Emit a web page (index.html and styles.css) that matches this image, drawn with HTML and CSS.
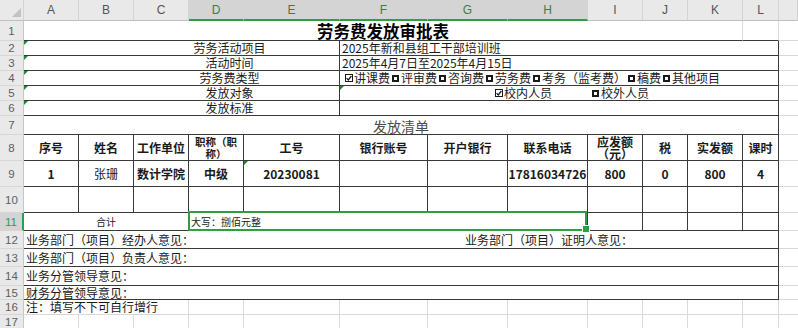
FILE: index.html
```html
<!DOCTYPE html>
<html lang="zh-CN">
<head>
<meta charset="utf-8">
<title>劳务费发放审批表</title>
<link rel="stylesheet" href="styles.css">
</head>
<body>
<div class="sheet">
  <div class="corner"><span class="tri"></span></div>
  <div class="ch">A</div>
  <div class="ch">B</div>
  <div class="ch">C</div>
  <div class="ch sel">D</div>
  <div class="ch sel">E</div>
  <div class="ch sel">F</div>
  <div class="ch sel">G</div>
  <div class="ch sel">H</div>
  <div class="ch">I</div>
  <div class="ch">J</div>
  <div class="ch">K</div>
  <div class="ch">L</div>
  <div class="ch"></div>

  <div class="rh">1</div>
  <div class="c s11 bb title">劳务费发放审批表</div>
  <div class="c bb"></div>
  <div class="c m"></div>

  <div class="rh">2</div>
  <div class="c s5 b label err">劳务活动项目</div>
  <div class="c s7 b val">2025年新和县组工干部培训班</div>
  <div class="c m"></div>

  <div class="rh">3</div>
  <div class="c s5 b label err">活动时间</div>
  <div class="c s7 b val">2025年4月7日至2025年4月15日</div>
  <div class="c m"></div>

  <div class="rh">4</div>
  <div class="c s5 b label err">劳务费类型</div>
  <div class="c s7 b val types">
    <svg class="cb on" viewBox="0 0 8 8"><rect x="0.5" y="0.5" width="7" height="7" fill="none" stroke="#1a1a1a" stroke-width="1"/><path d="M1.6 4.1 L3.3 5.9 L6.4 2" fill="none" stroke="#1a1a1a" stroke-width="1.3"/></svg><span>讲课费</span>
    <svg class="cb" viewBox="0 0 7 7"><rect x="1" y="1" width="5" height="5" fill="none" stroke="#1a1a1a" stroke-width="2"/></svg><span>评审费</span>
    <svg class="cb" viewBox="0 0 7 7"><rect x="1" y="1" width="5" height="5" fill="none" stroke="#1a1a1a" stroke-width="2"/></svg><span>咨询费</span>
    <svg class="cb" viewBox="0 0 7 7"><rect x="1" y="1" width="5" height="5" fill="none" stroke="#1a1a1a" stroke-width="2"/></svg><span>劳务费</span>
    <svg class="cb" viewBox="0 0 7 7"><rect x="1" y="1" width="5" height="5" fill="none" stroke="#1a1a1a" stroke-width="2"/></svg><span>考务（监考费）</span>
    <svg class="cb" viewBox="0 0 7 7"><rect x="1" y="1" width="5" height="5" fill="none" stroke="#1a1a1a" stroke-width="2"/></svg><span>稿费</span>
    <svg class="cb" viewBox="0 0 7 7"><rect x="1" y="1" width="5" height="5" fill="none" stroke="#1a1a1a" stroke-width="2"/></svg><span>其他项目</span>
  </div>
  <div class="c m"></div>

  <div class="rh">5</div>
  <div class="c s5 b label err">发放对象</div>
  <div class="c s7 b val target err">
    <svg class="cb on" viewBox="0 0 8 8"><rect x="0.5" y="0.5" width="7" height="7" fill="none" stroke="#1a1a1a" stroke-width="1"/><path d="M1.6 4.1 L3.3 5.9 L6.4 2" fill="none" stroke="#1a1a1a" stroke-width="1.3"/></svg><span>校内人员</span>
    <svg class="cb gap" viewBox="0 0 7 7"><rect x="1" y="1" width="5" height="5" fill="none" stroke="#1a1a1a" stroke-width="2"/></svg><span>校外人员</span>
  </div>
  <div class="c m"></div>

  <div class="rh">6</div>
  <div class="c s5 b label err">发放标准</div>
  <div class="c s7 b val"></div>
  <div class="c m"></div>

  <div class="rh">7</div>
  <div class="c s12 b list">发放清单</div>
  <div class="c m"></div>

  <div class="rh">8</div>
  <div class="c b hd">序号</div>
  <div class="c b hd">姓名</div>
  <div class="c b hd">工作单位</div>
  <div class="c b hd wrap small">职称（职称）</div>
  <div class="c b hd">工号</div>
  <div class="c b hd">银行账号</div>
  <div class="c b hd">开户银行</div>
  <div class="c b hd">联系电话</div>
  <div class="c b hd wrap">应发额（元）</div>
  <div class="c b hd">税</div>
  <div class="c b hd">实发额</div>
  <div class="c b hd">课时</div>
  <div class="c m"></div>

  <div class="rh">9</div>
  <div class="c b hd">1</div>
  <div class="c b">张珊</div>
  <div class="c b hd">数计学院</div>
  <div class="c b hd">中级</div>
  <div class="c b hd err">20230081</div>
  <div class="c b"></div>
  <div class="c b"></div>
  <div class="c b hd">17816034726</div>
  <div class="c b hd">800</div>
  <div class="c b hd">0</div>
  <div class="c b hd">800</div>
  <div class="c b hd">4</div>
  <div class="c m"></div>

  <div class="rh">10</div>
  <div class="c b"></div>
  <div class="c b"></div>
  <div class="c b"></div>
  <div class="c b"></div>
  <div class="c b"></div>
  <div class="c b"></div>
  <div class="c b"></div>
  <div class="c b"></div>
  <div class="c b"></div>
  <div class="c b"></div>
  <div class="c b"></div>
  <div class="c b"></div>
  <div class="c m"></div>

  <div class="rh sel">11</div>
  <div class="c s3 b tiny">合计</div>
  <div class="c s5 b tiny val selbox">大写：捌佰元整</div>
  <div class="c b"></div>
  <div class="c b"></div>
  <div class="c b"></div>
  <div class="c b"></div>
  <div class="c m"></div>

  <div class="rh">12</div>
  <div class="c s12 b val"><span>业务部门（项目）经办人意见：</span><span class="proof">业务部门（项目）证明人意见：</span></div>
  <div class="c m"></div>

  <div class="rh">13</div>
  <div class="c s12 b val">业务部门（项目）负责人意见：</div>
  <div class="c m"></div>

  <div class="rh">14</div>
  <div class="c s12 b val">业务分管领导意见：</div>
  <div class="c m"></div>

  <div class="rh">15</div>
  <div class="c s12 b val">财务分管领导意见：</div>
  <div class="c m"></div>

  <div class="rh">16</div>
  <div class="c s3 val">注：填写不下可自行增行</div>
  <div class="c"></div>
  <div class="c"></div>
  <div class="c"></div>
  <div class="c"></div>
  <div class="c"></div>
  <div class="c"></div>
  <div class="c"></div>
  <div class="c"></div>
  <div class="c"></div>
  <div class="c m"></div>

  <div class="rh">17</div>
  <div class="c"></div>
  <div class="c"></div>
  <div class="c"></div>
  <div class="c"></div>
  <div class="c"></div>
  <div class="c"></div>
  <div class="c"></div>
  <div class="c"></div>
  <div class="c"></div>
  <div class="c"></div>
  <div class="c"></div>
  <div class="c"></div>
  <div class="c m"></div>
</div>
</body>
</html>
```

FILE: styles.css
```css
* { box-sizing: border-box; }

html, body {
  margin: 0;
  padding: 0;
  background: #ffffff;
}

body {
  width: 798px;
  height: 328px;
  overflow: hidden;
  font-family: "Noto Sans CJK SC", "Noto Sans", sans-serif;
  color: #1a1a1a;
}

.sheet {
  display: grid;
  grid-template-columns: 24px 55px 55px 55px 55px 96px 88px 80px 80px 55px 45px 55px 36px 19px;
  grid-template-rows: 21px 20px 15px 15px 15px 15px 15px 19px 26px 26px 26px 18px 18px 18px 19px 14px 15px 14px;
}

/* headers */
.corner,
.ch {
  background: #e9e9e9;
  border-right: 1px solid #d3d3d3;
  border-bottom: 1px solid #bfbfbf;
}

.corner {
  display: flex;
  justify-content: flex-end;
  align-items: flex-end;
  padding: 0 2px 3px 0;
}

.tri {
  width: 0;
  height: 0;
  border-left: 9px solid transparent;
  border-bottom: 9px solid #c2c2c2;
}

.ch {
  display: flex;
  align-items: center;
  justify-content: center;
  font-family: "Liberation Sans", sans-serif;
  font-size: 12px;
  color: #555555;
}

.ch.sel {
  background: #d4d4d4;
  border-bottom: 2px solid #2f9e44;
  color: #3c7d49;
}

.rh {
  background: #e9e9e9;
  border-right: 1px solid #c6c6c6;
  border-bottom: 1px solid #d6d6d6;
  display: flex;
  align-items: center;
  justify-content: center;
  font-family: "Liberation Sans", sans-serif;
  font-size: 11.5px;
  line-height: 12px;
  color: #5e5e5e;
}

.rh.sel {
  background: #d4d4d4;
  border-right: 2px solid #2f9e44;
  color: #2f9e44;
}

/* cells */
.c {
  position: relative;
  min-width: 0;
  border-right: 1px solid #dadada;
  border-bottom: 1px solid #dadada;
  display: flex;
  align-items: center;
  justify-content: center;
  white-space: nowrap;
  font-size: 12px;
  line-height: 12px;
}

.c.m { border-right: 0; }

.b {
  border-right-color: #3a3a3a;
  border-bottom-color: #3a3a3a;
}

.bb { border-bottom-color: #3a3a3a; }

.s3 { grid-column: span 3; }
.s5 { grid-column: span 5; }
.s7 { grid-column: span 7; }
.s11 { grid-column: span 11; }
.s12 { grid-column: span 12; }

.title {
  font-size: 16.5px;
  line-height: 17px;
  font-weight: 700;
  color: #000000;
  padding-top: 1px;
}

.label {
  padding-left: 96px;
}

.val {
  justify-content: flex-start;
  padding-left: 2px;
}

.types { padding-left: 3px; }

.target { padding-left: 153px; }

.cb {
  width: 7px;
  height: 7px;
  margin: 0 2px;
  flex: none;
}

.cb.on {
  width: 8px;
  height: 8px;
  margin: 0 1px 0 2px;
}

.cb.gap { margin-left: 40px; }

.list {
  font-size: 14px;
  line-height: 14px;
  color: #4d4d4d;
  padding-top: 1px;
}

.hd {
  font-weight: 700;
}

.wrap {
  white-space: normal;
  text-align: center;
  line-height: 12px;
  padding: 0 3px;
}

.wrap.small {
  font-size: 10.5px;
  padding: 0 5px;
}

.tiny {
  font-size: 10px;
  line-height: 11px;
  color: #222222;
}

.proof { margin-left: 271px; }

/* error indicators */
.err::before {
  content: "";
  position: absolute;
  left: 0;
  top: 0;
  border-top: 4px solid #1d8a2a;
  border-right: 4px solid transparent;
}

/* selection overlay */
.selbox { z-index: 2; }

.selbox::after {
  content: "";
  position: absolute;
  left: -1px;
  top: -2px;
  right: 0;
  bottom: -1px;
  border: 2px solid #2f9e44;
  pointer-events: none;
}

.selbox::before {
  content: "";
  position: absolute;
  right: -3px;
  bottom: -3px;
  width: 6px;
  height: 6px;
  background: #2f9e44;
  border: 1px solid #ffffff;
  z-index: 3;
}
```
